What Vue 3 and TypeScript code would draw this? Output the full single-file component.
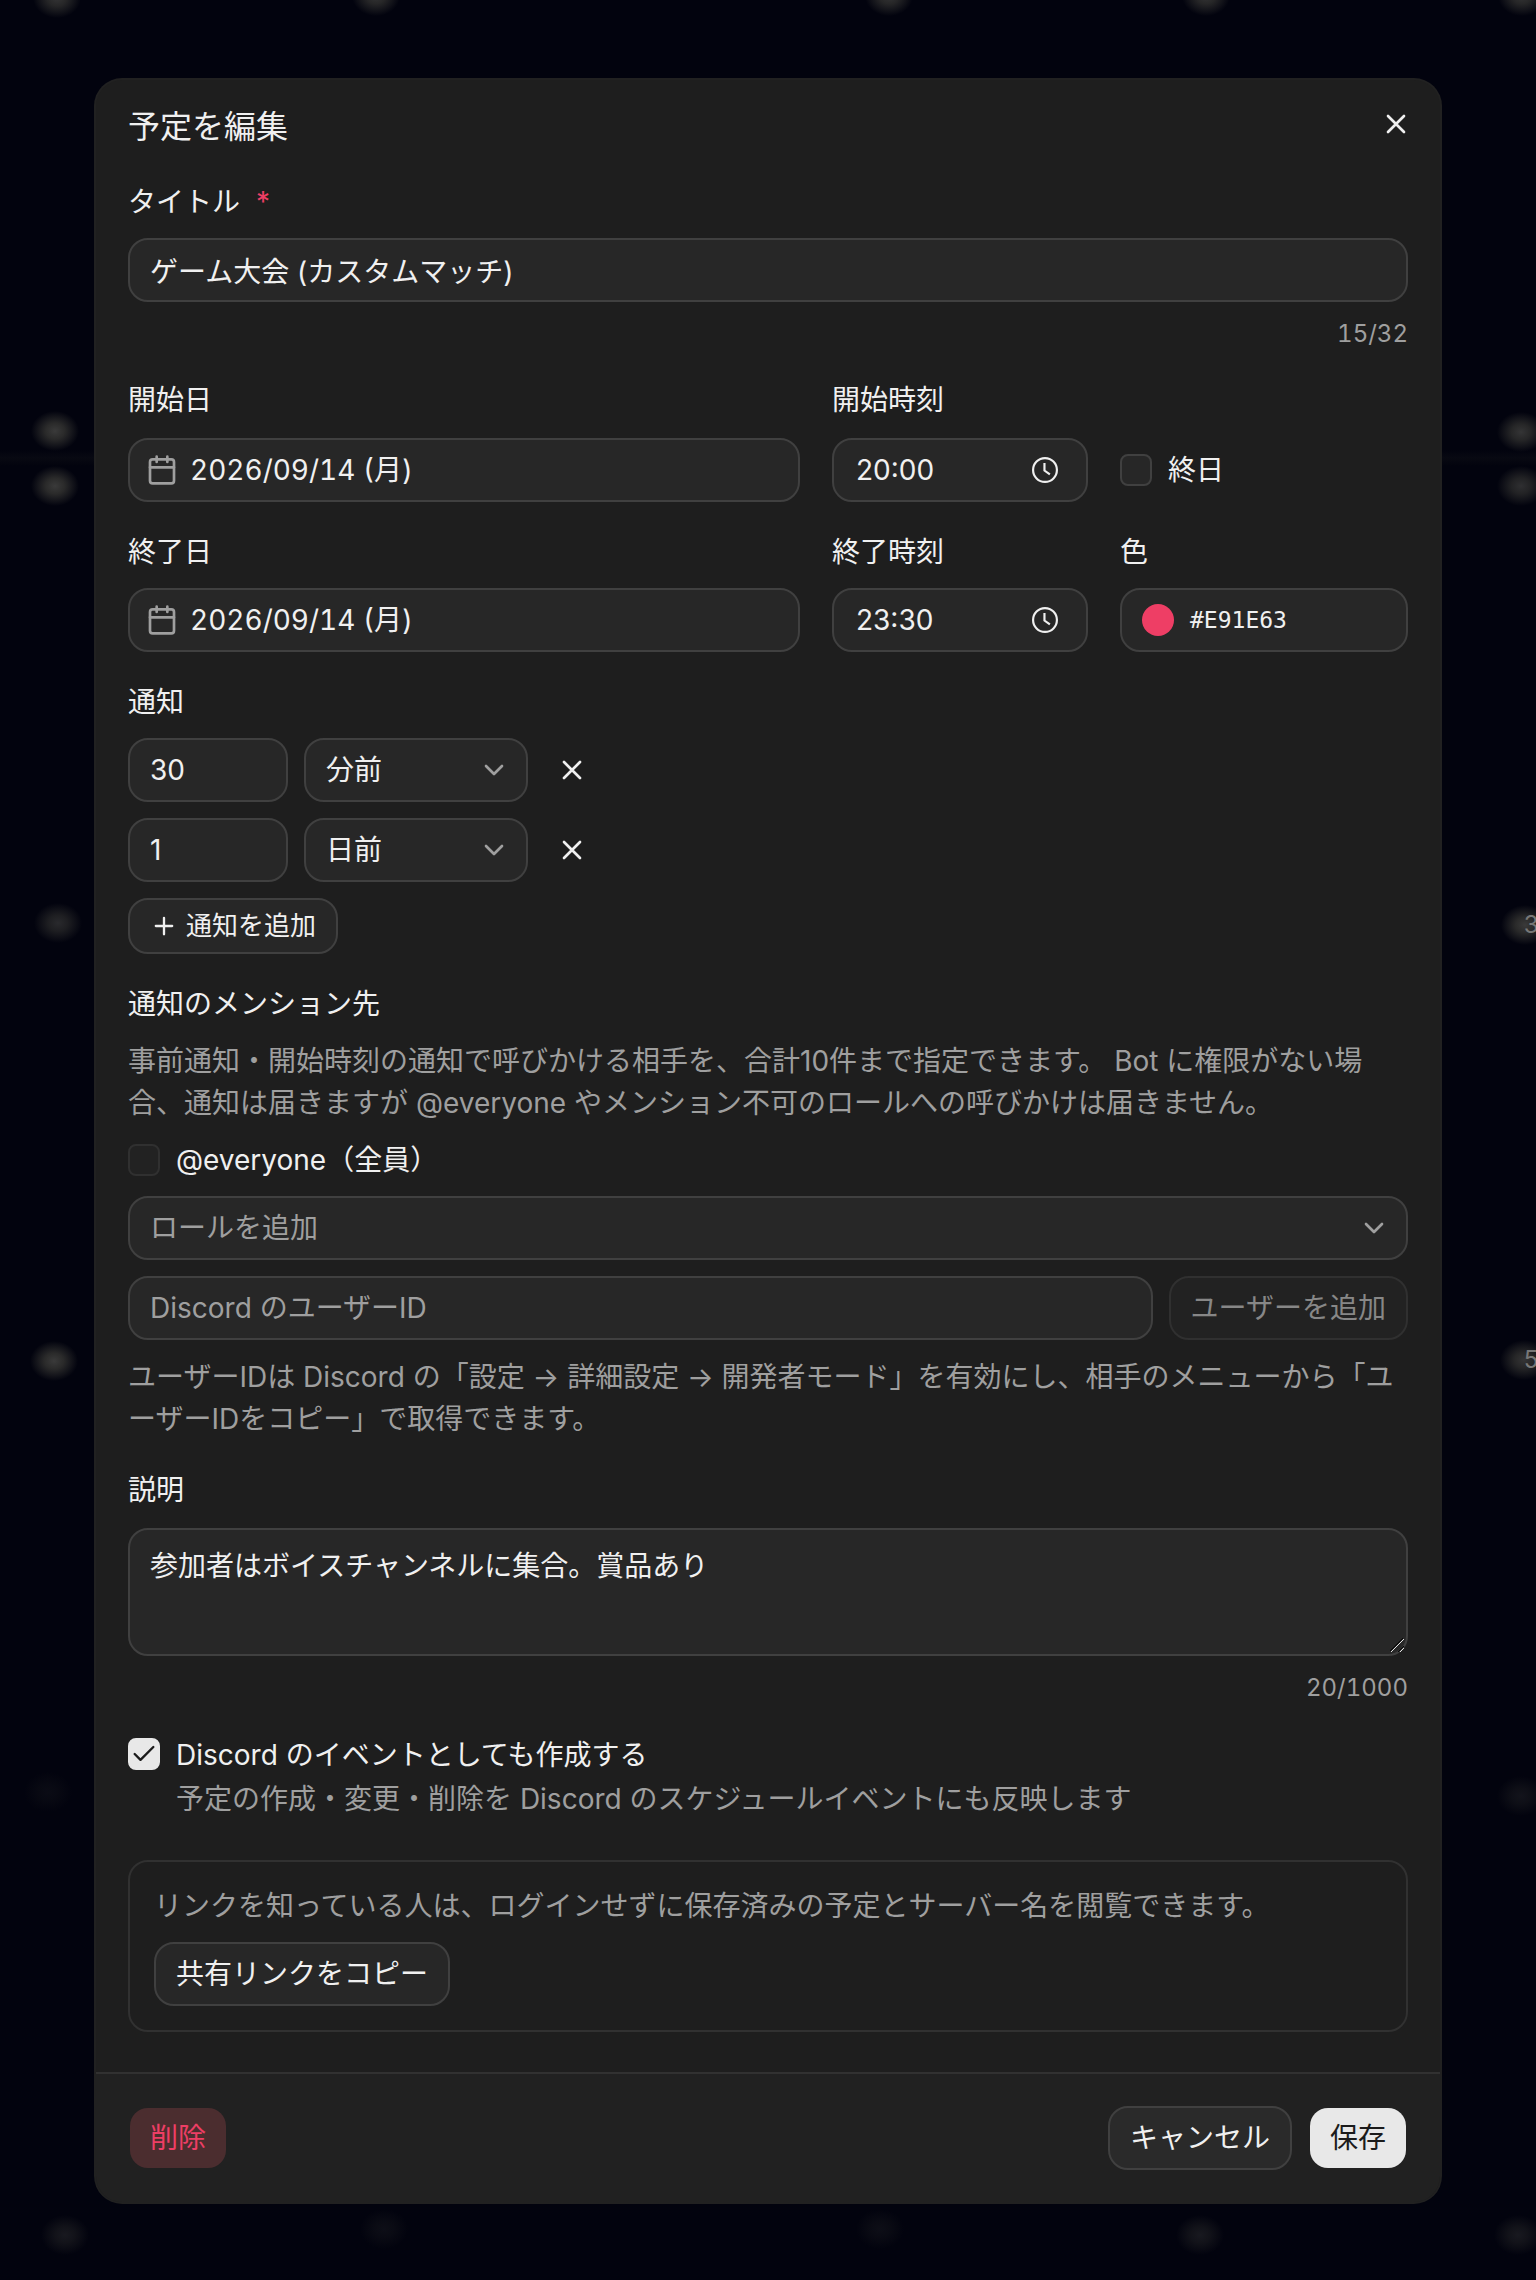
<script setup lang="ts">
import { ref } from 'vue'

interface Glow {
  x: number
  y: number
  strength: number
}

interface Reminder {
  id: number
  amount: string
  unit: string
}

const title = ref('ゲーム大会 (カスタムマッチ)')
const startTime = ref('20:00')
const endTime = ref('23:30')
const allDay = ref(false)
const everyone = ref(false)
const role = ref('')
const userId = ref('')
const description = ref('参加者はボイスチャンネルに集合。賞品あり')
const asDiscordEvent = ref(true)
const reminders = ref<Reminder[]>([
  { id: 1, amount: '30', unit: '分前' },
  { id: 2, amount: '1', unit: '日前' },
])
const units = ['分前', '時間前', '日前']

// Softened day numbers of the calendar behind the dialog: x in % of width, y in px.
const glows: Glow[] = [
  { x: 3.7, y: -2, strength: 0.9 },
  { x: 24.5, y: -4, strength: 0.9 },
  { x: 57.9, y: -4, strength: 0.9 },
  { x: 78.5, y: -4, strength: 0.9 },
  { x: 99.1, y: -4, strength: 0.9 },
  { x: 3.6, y: 431, strength: 1 },
  { x: 3.6, y: 486, strength: 1 },
  { x: 3.8, y: 923, strength: 0.7 },
  { x: 3.5, y: 1361, strength: 1 },
  { x: 3.1, y: 1792, strength: 0.15 },
  { x: 99, y: 432, strength: 0.9 },
  { x: 99, y: 486, strength: 0.8 },
  { x: 99.3, y: 925, strength: 1 },
  { x: 99.2, y: 1360, strength: 0.9 },
  { x: 99, y: 1796, strength: 0.3 },
  { x: 4.2, y: 2235, strength: 0.4 },
  { x: 25, y: 2229, strength: 0.2 },
  { x: 57.3, y: 2229, strength: 0.2 },
  { x: 78.1, y: 2235, strength: 0.4 },
  { x: 98.8, y: 2235, strength: 0.4 },
]

function removeReminder(id: number) {
  reminders.value = reminders.value.filter((r) => r.id !== id)
}

function addReminder() {
  const id = Math.max(0, ...reminders.value.map((r) => r.id)) + 1
  reminders.value.push({ id, amount: '10', unit: '分前' })
}
</script>

<template>
  <div class="page">
    <div class="backdrop" aria-hidden="true">
      <span class="week-line"></span>
      <span
        v-for="(g, i) in glows"
        :key="i"
        class="glow"
        :style="{ left: g.x + '%', top: g.y + 'px', opacity: g.strength }"
      ></span>
      <span class="day day-first">3</span>
      <span class="day day-second">5</span>
    </div>

    <form class="dialog" role="dialog" aria-labelledby="dialog-title" @submit.prevent>
      <button type="button" class="icon-button close" aria-label="閉じる">
        <svg class="icon" viewBox="0 0 24 24"><path d="M18 6 6 18M6 6l12 12" /></svg>
      </button>

      <div class="body">
        <h1 id="dialog-title">予定を編集</h1>

        <div class="field">
          <label class="label" for="title">タイトル<span class="required">*</span></label>
          <input id="title" v-model="title" class="control" type="text" maxlength="32" />
          <p class="counter">{{ title.length }}/32</p>
        </div>

        <div class="schedule">
          <div class="field">
            <label class="label tall" for="start-date">開始日</label>
            <button id="start-date" type="button" class="control date">
              <svg class="icon muted" viewBox="0 0 24 24">
                <path d="M8 2v4M16 2v4M3 10h18" />
                <rect x="3" y="4" width="18" height="18" rx="2" />
              </svg>
              2026/09/14 (月)
            </button>
          </div>
          <div class="field">
            <label class="label tall" for="start-time">開始時刻</label>
            <div class="time">
              <input id="start-time" v-model="startTime" class="control" type="text" />
              <svg class="clock" viewBox="0 0 24 24">
                <circle cx="12" cy="12" r="11" />
                <path d="M11.5 5.5v7l5 3.5" />
              </svg>
            </div>
          </div>
          <div class="all-day">
            <label class="check-line">
              <span class="check">
                <input v-model="allDay" type="checkbox" />
              </span>
              <span>終日</span>
            </label>
          </div>

          <div class="field">
            <label class="label" for="end-date">終了日</label>
            <button id="end-date" type="button" class="control date">
              <svg class="icon muted" viewBox="0 0 24 24">
                <path d="M8 2v4M16 2v4M3 10h18" />
                <rect x="3" y="4" width="18" height="18" rx="2" />
              </svg>
              2026/09/14 (月)
            </button>
          </div>
          <div class="field">
            <label class="label" for="end-time">終了時刻</label>
            <div class="time">
              <input id="end-time" v-model="endTime" class="control" type="text" />
              <svg class="clock" viewBox="0 0 24 24">
                <circle cx="12" cy="12" r="11" />
                <path d="M11.5 5.5v7l5 3.5" />
              </svg>
            </div>
          </div>
          <div class="field">
            <label class="label" for="color">色</label>
            <button id="color" type="button" class="control color">
              <span class="swatch"></span>
              <span class="hex">#E91E63</span>
            </button>
          </div>
        </div>

        <div class="field" role="group" aria-labelledby="reminders-label">
          <span id="reminders-label" class="label">通知</span>
          <div v-for="r in reminders" :key="r.id" class="reminder">
            <input v-model="r.amount" class="control amount" type="text" aria-label="通知の数値" />
            <div class="select unit">
              <select v-model="r.unit" class="control" aria-label="通知の単位">
                <option v-for="u in units" :key="u" :value="u">{{ u }}</option>
              </select>
              <svg class="icon muted chevron" viewBox="0 0 24 24"><path d="m6 9 6 6 6-6" /></svg>
            </div>
            <button type="button" class="icon-button" aria-label="通知を削除" @click="removeReminder(r.id)">
              <svg class="icon" viewBox="0 0 24 24"><path d="M18 6 6 18M6 6l12 12" /></svg>
            </button>
          </div>
          <button type="button" class="button small" @click="addReminder">
            <svg class="icon plus" viewBox="0 0 24 24"><path d="M5 12h14M12 5v14" /></svg>
            通知を追加
          </button>
        </div>

        <div class="field" role="group" aria-labelledby="mention-label">
          <span id="mention-label" class="label">通知のメンション先</span>
          <p class="note">
            事前通知・開始時刻の通知で呼びかける相手を、合計10件まで指定できます。 Bot に権限がない場合、通知は届きますが @everyone やメンション不可のロールへの呼びかけは届きません。
          </p>
          <label class="check-line everyone">
            <span class="check faint">
              <input v-model="everyone" type="checkbox" />
            </span>
            <span>@everyone（全員）</span>
          </label>
          <div class="select">
            <select v-model="role" class="control placeholder" aria-label="ロールを追加">
              <option value="">ロールを追加</option>
            </select>
            <svg class="icon muted chevron" viewBox="0 0 24 24"><path d="m6 9 6 6 6-6" /></svg>
          </div>
          <div class="user-row">
            <input
              v-model="userId"
              class="control"
              type="text"
              placeholder="Discord のユーザーID"
              aria-label="Discord のユーザーID"
            />
            <button type="button" class="button" disabled>ユーザーを追加</button>
          </div>
          <p class="note">
            ユーザーIDは Discord の「設定 → 詳細設定 → 開発者モード」を有効にし、相手のメニューから「ユーザーIDをコピー」で取得できます。
          </p>
        </div>

        <div class="field">
          <label class="label tall" for="description">説明</label>
          <div class="area">
            <textarea id="description" v-model="description" class="control" maxlength="1000"></textarea>
            <svg class="grip" viewBox="0 0 16 16">
              <path class="shade" d="M1 14 14 1M9 15l6-6" />
              <path d="M2 15 15 2M11 15l4-4" />
            </svg>
          </div>
          <p class="counter">{{ description.length }}/1000</p>
        </div>

        <div class="event">
          <span class="check">
            <input id="discord-event" v-model="asDiscordEvent" type="checkbox" />
            <svg v-if="asDiscordEvent" class="icon tick" viewBox="0 0 24 24"><path d="M20 6 9 17l-5-5" /></svg>
          </span>
          <div class="event-text">
            <label for="discord-event">Discord のイベントとしても作成する</label>
            <p class="note">予定の作成・変更・削除を Discord のスケジュールイベントにも反映します</p>
          </div>
        </div>

        <section class="share">
          <p>リンクを知っている人は、ログインせずに保存済みの予定とサーバー名を閲覧できます。</p>
          <button type="button" class="button">共有リンクをコピー</button>
        </section>
      </div>

      <footer class="footer">
        <button type="button" class="button danger">削除</button>
        <button type="button" class="button cancel">キャンセル</button>
        <button type="submit" class="button primary">保存</button>
      </footer>
    </form>
  </div>
</template>

<style>
body {
  margin: 0;
  background: #02030e;
}
</style>

<style scoped>
.page {
  position: relative;
  box-sizing: border-box;
  min-height: 100vh;
  padding: 80px 32px 64px;
  color: #f0f0f0;
  font-family: Inter, "Noto Sans CJK JP", sans-serif;
  font-size: 28px;
  line-height: 38px;
}

.page *,
.page *::before {
  box-sizing: border-box;
}

.backdrop {
  position: absolute;
  inset: 0;
  overflow: hidden;
}

.week-line {
  position: absolute;
  top: 450px;
  left: 0;
  right: 0;
  height: 16px;
  background: linear-gradient(transparent, #080912, transparent);
}

.glow {
  position: absolute;
  width: 48px;
  height: 40px;
  margin: -20px 0 0 -24px;
  background: radial-gradient(closest-side, #3a3a3a, #2a2a2a 40%, transparent);
}

.day {
  position: absolute;
  left: 99.2%;
  color: #777777;
  font-size: 24px;
  line-height: 32px;
}

.day-first {
  top: 909px;
}

.day-second {
  top: 1344px;
}

.dialog {
  position: relative;
  max-width: 1344px;
  margin: 0 auto;
  border-radius: 26px;
  background: #1e1e1e;
  box-shadow: 0 0 0 2px #212121;
}

.close {
  position: absolute;
  top: 16px;
  right: 16px;
}

.body {
  display: flex;
  flex-direction: column;
  gap: 32px;
  padding: 32px 32px 40px;
}

h1 {
  margin: 0 0 10px;
  font-size: 32px;
  font-weight: 400;
  line-height: 30px;
}

p {
  margin: 0;
}

.field {
  display: flex;
  flex-direction: column;
  align-items: stretch;
  gap: 16px;
  min-width: 0;
}

.label {
  padding-bottom: 2px;
  line-height: 36px;
}

.label.tall {
  padding-bottom: 4px;
}

.required {
  margin-left: 16px;
  color: #ee3e65;
}

.control,
.button {
  font: inherit;
  color: inherit;
  border: 2px solid #404040;
  border-radius: 20px;
  background-color: #272727;
}

.control {
  display: block;
  width: 100%;
  height: 64px;
  margin: 0;
  padding: 0 20px;
  outline: none;
  text-align: left;
  appearance: none;
}

.control::placeholder {
  color: #9f9f9f;
  opacity: 1;
}

.control.placeholder {
  color: #9f9f9f;
}

.area {
  position: relative;
}

textarea.control {
  height: 128px;
  padding: 16px 20px;
  line-height: 40px;
  resize: none;
}

.grip {
  position: absolute;
  right: 3px;
  bottom: 3px;
  width: 16px;
  height: 16px;
  fill: none;
  stroke: #e0e0e0;
  stroke-width: 1;
  pointer-events: none;
}

.grip .shade {
  stroke: #050505;
}

.counter {
  color: #9f9f9f;
  font-size: 24px;
  font-variant-numeric: tabular-nums;
  line-height: 32px;
  text-align: right;
}

.icon {
  flex: none;
  width: 32px;
  height: 32px;
  fill: none;
  stroke: currentColor;
  stroke-width: 2;
  stroke-linecap: round;
  stroke-linejoin: round;
}

.muted {
  color: #9f9f9f;
}

.schedule {
  display: grid;
  grid-template-columns: 1fr 256px 288px;
  gap: 32px;
}

.control.date {
  display: flex;
  align-items: center;
  gap: 12px;
  padding: 0 16px;
  font-variant-numeric: tabular-nums;
}

.time,
.select {
  position: relative;
}

.time .control {
  padding: 0 22px;
}

.clock {
  position: absolute;
  top: 19px;
  right: 30px;
  width: 26px;
  height: 26px;
  fill: none;
  stroke: #f0f0f0;
  stroke-width: 2;
  pointer-events: none;
}

.chevron {
  position: absolute;
  top: 16px;
  right: 18px;
  pointer-events: none;
}

.all-day {
  display: flex;
  align-items: flex-end;
  padding-bottom: 12px;
}

.check-line {
  display: flex;
  align-items: center;
  gap: 16px;
  line-height: 40px;
}

.check {
  position: relative;
  flex: none;
  width: 32px;
  height: 32px;
}

.check input {
  display: block;
  width: 32px;
  height: 32px;
  margin: 0;
  border: 2px solid #404040;
  border-radius: 8px;
  background: #272727;
  appearance: none;
}

.check.faint input {
  border-color: #303030;
  background: #222222;
}

.check input:checked {
  border-color: #e8e8e8;
  background: #e8e8e8;
}

.tick {
  position: absolute;
  top: 2px;
  left: 2px;
  width: 28px;
  height: 28px;
  color: #1b1b1b;
  pointer-events: none;
}

.control.color {
  display: flex;
  align-items: center;
  gap: 16px;
}

.swatch {
  width: 32px;
  height: 32px;
  border-radius: 50%;
  background: #ee3e65;
}

.hex {
  font-family: "DejaVu Sans Mono", monospace;
  font-size: 23px;
  line-height: 32px;
}

.reminder {
  display: flex;
  align-items: center;
  gap: 16px;
}

.amount {
  width: 160px;
}

.unit {
  width: 224px;
}

.icon-button {
  display: grid;
  place-items: center;
  width: 56px;
  height: 56px;
  padding: 0;
  border: 0;
  border-radius: 16px;
  background: none;
  color: inherit;
}

.button {
  flex: none;
  height: 64px;
  padding: 0 20px;
  white-space: nowrap;
}

.button:disabled {
  border-color: #303030;
  background-color: #222222;
  color: #878787;
}

.button.small {
  display: flex;
  align-items: center;
  align-self: flex-start;
  gap: 8px;
  height: 56px;
  font-size: 26px;
}

.plus {
  width: 28px;
  height: 28px;
}

.note {
  color: #9f9f9f;
  line-height: 42px;
}

.user-row {
  display: flex;
  gap: 16px;
}

.user-row .control {
  flex: 1;
  min-width: 0;
}

.event {
  display: flex;
  gap: 16px;
}

.event .check {
  margin-top: 2px;
}

.event-text {
  display: flex;
  flex-direction: column;
  gap: 4px;
}

.share {
  display: flex;
  flex-direction: column;
  align-items: flex-start;
  gap: 16px;
  margin-top: 8px;
  padding: 24px;
  border: 2px solid #313131;
  border-radius: 20px;
  color: #9f9f9f;
  line-height: 40px;
}

.share .button {
  color: #f0f0f0;
}

.footer {
  display: flex;
  gap: 16px;
  padding: 32px;
  border-top: 2px solid #313131;
  border-radius: 0 0 26px 26px;
  background: #212121;
}

.button.danger,
.button.primary {
  border-color: transparent;
  background-clip: padding-box;
}

.button.danger {
  margin-right: auto;
  background-color: #4b2d2f;
  color: #ee3e65;
}

.button.cancel {
  background-color: #2a2a2a;
}

.button.primary {
  background-color: #e8e8e8;
  color: #1b1b1b;
}
</style>
